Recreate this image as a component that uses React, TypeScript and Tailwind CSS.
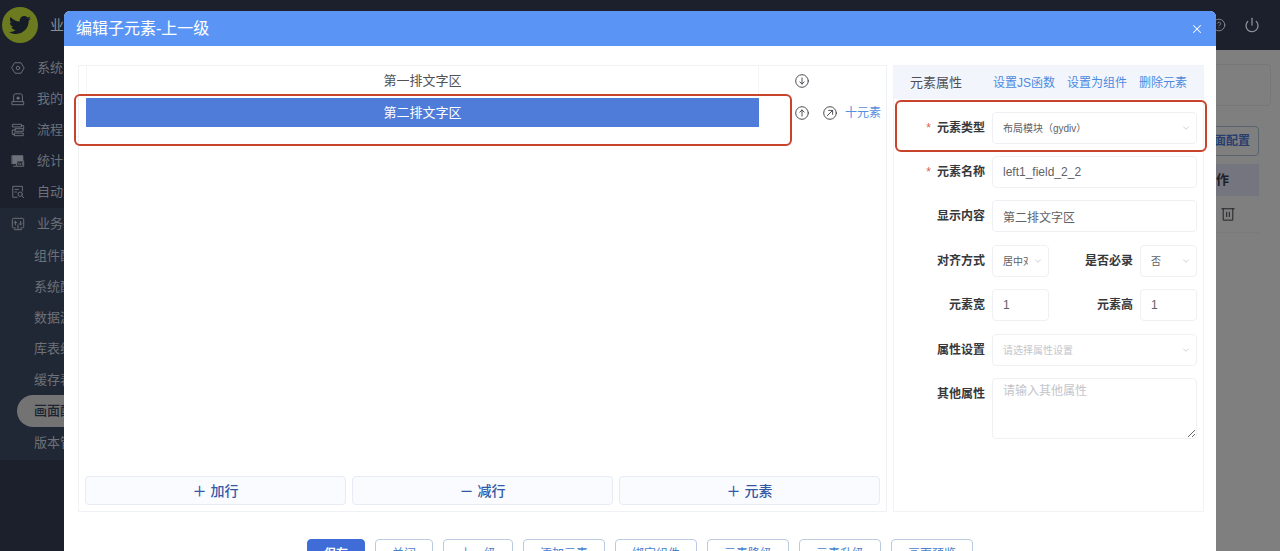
import type { ReactNode } from "react";
import { FaTwitter } from "react-icons/fa";
import { ChevronDown, CircleHelp, Power, X } from "lucide-react";

type IconProps = { children: ReactNode; className?: string };

function Stroke({ children, className = "size-3.5" }: IconProps) {
  return (
    <svg
      viewBox="0 0 16 16"
      className={className}
      fill="none"
      stroke="currentColor"
      strokeWidth="1.1"
      strokeLinecap="round"
      strokeLinejoin="round"
      aria-hidden="true"
    >
      {children}
    </svg>
  );
}

const menu = [
  {
    label: "系统管理",
    icon: (
      <>
        <path d="M4.6 2h6.8L15 8l-3.6 6H4.6L1 8z" />
        <circle cx="8" cy="8" r="2" />
      </>
    ),
  },
  {
    label: "我的工作",
    icon: (
      <>
        <path d="M3 11V4.500A2.500 2.500 0 0 1 5.500 2h5A2.500 2.500 0 0 1 13 4.500V11M1.500 11h13v3.500h-13z" />
        <circle cx="8" cy="7" r="1.300" fill="currentColor" />
      </>
    ),
  },
  {
    label: "流程管理",
    icon: (
      <>
        <path d="M2 1.500h10v3H2zM5 6.500h9v3H5zM4 11.500h10v3H4z" />
        <path d="M12 3h2.500v3.500M5 8H1.500v5H4" />
      </>
    ),
  },
  {
    label: "统计分析",
    icon: (
      <>
        <path d="M1.500 2h12v9h-12z" fill="currentColor" />
        <path d="M7 8h7.500v6H7z" fill="#1b202c" />
        <path d="M9 12v-2M11 12v-1M13 12v-2M3 14h3" />
      </>
    ),
  },
  {
    label: "自动流程",
    icon: (
      <>
        <path d="M7 14H2V1.500h11V7" />
        <path d="M4.500 5h4M4.500 8h2" />
        <circle cx="10.500" cy="10.500" r="2.500" />
        <path d="M12.500 12.500l2 2" />
      </>
    ),
  },
];

const submenu = ["组件配置", "系统配置", "数据源", "库表维护", "缓存表", "画面配置", "版本管理"];

function Sidebar() {
  return (
    <nav className="w-[155px] shrink-0 bg-[#1b202c] text-[13px] text-[#6d7179]">
      <ul className="pt-0.5">
        {menu.map((item) => (
          <li key={item.label}>
            <a href="#" className="flex h-[31px] items-center gap-3 pl-[11px]">
              <Stroke>{item.icon}</Stroke>
              {item.label}
            </a>
          </li>
        ))}
      </ul>
      <div className="mt-px bg-[#212835] pb-0.5">
        <a href="#" className="flex h-8 items-center gap-3 pl-[11px]">
          <Stroke>
            <path d="M5 12.500H3A1.500 1.500 0 0 1 1.500 11V3A1.500 1.500 0 0 1 3 1.500h10A1.500 1.500 0 0 1 14.500 3v8a1.500 1.500 0 0 1-1.500 1.500h-2M4 14.500h8" />
            <path d="M5 9V5M3.500 6.500L5 5l1.500 1.500M11 5v4M9.500 7.500L11 9l1.500-1.500M8 9v5" />
          </Stroke>
          业务平台
        </a>
        <ul>
          {submenu.map((label) => (
            <li key={label} className="pl-[17px]">
              <a
                href="#"
                className={
                  label === "画面配置"
                    ? "flex h-8 items-center rounded-l-full bg-[#737373] pl-[17px] font-medium text-[#1b2433]"
                    : "flex h-[31px] items-center pl-[17px]"
                }
              >
                {label}
              </a>
            </li>
          ))}
        </ul>
      </div>
    </nav>
  );
}

function TrashIcon() {
  return (
    <Stroke className="size-3.5">
      <path d="M1 2h14M2.500 2v13h11V2M6.500 6v5M9.500 6v5" />
    </Stroke>
  );
}

function Background() {
  return (
    <div className="flex h-full flex-col bg-[#7f7f7f]">
      <header className="flex h-[50px] shrink-0 items-center justify-between bg-[#1b202c] pr-5 pl-0.5 text-[#8b8e94]">
        <div className="flex items-center gap-3">
          <span className="flex size-9 items-center justify-center rounded-full bg-[#6c7a20] text-[#151c26]">
            <FaTwitter className="size-[22px]" />
          </span>
          <span className="text-sm">业</span>
        </div>
        <div className="flex items-center gap-[18px]">
          <CircleHelp className="size-3.5" strokeWidth={1.5} />
          <Power className="size-4" strokeWidth={2} />
        </div>
      </header>
      <div className="flex min-h-0 flex-1">
        <Sidebar />
        <main className="flex-1 pt-3.5 pr-[9px] pl-3">
          <div className="h-[42px] rounded border border-[#777]" />
          <div className="mt-5 mr-3 flex justify-end">
            <button className="h-[30px] rounded-sm border border-[#59626f] px-2 text-xs font-bold text-[#263d70]">
              画面配置
            </button>
          </div>
          <div className="mt-2 mr-3">
            <table className="w-full text-right text-[13px] text-[#1d1f24]">
              <thead>
                <tr className="h-8 bg-[#74757f]">
                  <th className="pr-[30px] font-bold">操作</th>
                </tr>
              </thead>
              <tbody>
                <tr className="h-9 border-b border-[#7a7a7a]">
                  <td className="pr-6">
                    <button aria-label="删除" className="ml-auto block">
                      <TrashIcon />
                    </button>
                  </td>
                </tr>
              </tbody>
            </table>
          </div>
        </main>
      </div>
    </div>
  );
}

function CircleArrow({ label, path }: { label: string; path: string }) {
  return (
    <button aria-label={label} className="text-[#45474c]">
      <Stroke className="size-3.5">
        <circle cx="8" cy="8" r="7.200" />
        <path d={path} />
      </Stroke>
    </button>
  );
}

function Canvas() {
  const bar = "h-[29px] rounded-sm border border-[#e6ebf5] bg-[#fafbfe] text-sm font-medium text-[#3358a5]";
  return (
    <section className="flex flex-1 flex-col border border-[#f0f1f4] px-1.5 pb-1.5">
      <div className="flex-1 space-y-0.5 pl-px">
        <div className="flex">
          <div className="flex h-[30px] flex-1 items-center justify-center border border-t-0 border-[#f3f4f6] text-[13px] text-[#505256]">
            第一排文字区
          </div>
          <div className="flex w-[121px] items-center pl-9">
            <CircleArrow label="下移" path="M8 4.500v7M5.500 9L8 11.500 10.500 9" />
          </div>
        </div>
        <div className="relative flex">
          <div className="flex h-[29px] flex-1 items-center justify-center bg-[#4f7cd8] text-[13px] text-white">
            第二排文字区
          </div>
          <div className="flex w-[121px] items-center gap-3.5 pl-9">
            <CircleArrow label="上移" path="M8 11.500v-7M5.500 7L8 4.500 10.500 7" />
            <CircleArrow label="进入" path="M5 11l6-6M6.500 5H11v4.500" />
            <a href="#" className="-ml-1.5 text-xs whitespace-nowrap text-[#5490e0]">
              十元素
            </a>
          </div>
          <div className="pointer-events-none absolute -top-1 right-[88px] -left-3 h-[52px] rounded-md border-2 border-[#c8432c]" />
        </div>
      </div>
      <div className="grid grid-cols-3 gap-1.5">
        <button className={bar}>＋ 加行</button>
        <button className={bar}>－ 减行</button>
        <button className={bar}>＋ 元素</button>
      </div>
    </section>
  );
}

const control =
  "block w-full min-w-0 appearance-none rounded-sm border border-[#eff0f3] bg-transparent pl-2.5 outline-none";

function Label({ id, children, required }: { id: string; children: ReactNode; required?: boolean }) {
  return (
    <label htmlFor={id} className="w-[91px] shrink-0 pr-[7px] text-right text-xs leading-8 font-bold text-[#36383c]">
      {required && <span className="mr-1.5 font-normal text-[#d9604c]">*</span>}
      {children}
    </label>
  );
}

function Select({ id, value, muted, narrow }: { id: string; value: string; muted?: boolean; narrow?: boolean }) {
  return (
    <div className="relative min-w-0 flex-1">
      <select
        id={id}
        className={`${control} h-8 text-[10px] ${narrow ? "pr-5" : "pr-7"} ${muted ? "text-[#c3c5ca]" : "text-[#606266]"}`}
      >
        <option>{value}</option>
      </select>
      <ChevronDown className="pointer-events-none absolute top-[11px] right-1.5 size-2.5" stroke="#c6c8cd" />
    </div>
  );
}

function Input({ id, value }: { id: string; value: string }) {
  return (
    <div className="min-w-0 flex-1">
      <input id={id} defaultValue={value} className={`${control} h-8 pr-2 text-xs text-[#606266]`} />
    </div>
  );
}

function Properties() {
  return (
    <section className="w-[311px] shrink-0 border border-[#f2f3f6]">
      <div className="flex h-[33px] items-center justify-between bg-[#f3f5fd] px-4">
        <h2 className="text-[13px] text-[#4d4f54]">元素属性</h2>
        <div className="flex gap-3 text-xs text-[#4a8be0]">
          <a href="#">设置JS函数</a>
          <a href="#">设置为组件</a>
          <a href="#">删除元素</a>
        </div>
      </div>
      <form className="space-y-[13px] pt-[13px] pr-1.5 pl-[7px]">
        <div className="space-y-3">
          <div className="relative flex">
            <Label id="type" required>元素类型</Label>
            <Select id="type" value="布局模块（gydiv）" />
            <div className="pointer-events-none absolute -top-3 -right-2.5 -left-1.5 h-[52px] rounded-md border-2 border-[#c8432c]" />
          </div>
          <div className="flex">
            <Label id="name" required>元素名称</Label>
            <Input id="name" value="left1_field_2_2" />
          </div>
          <div className="flex">
            <Label id="content">显示内容</Label>
            <Input id="content" value="第二排文字区" />
          </div>
        </div>
        <div className="space-y-3">
          <div className="flex">
            <Label id="align">对齐方式</Label>
            <Select id="align" value="居中对齐" narrow />
            <Label id="must">是否必录</Label>
            <Select id="must" value="否" narrow />
          </div>
          <div className="flex">
            <Label id="width">元素宽</Label>
            <Input id="width" value="1" />
            <Label id="height">元素高</Label>
            <Input id="height" value="1" />
          </div>
        </div>
        <div className="space-y-3">
          <div className="flex">
            <Label id="attrs">属性设置</Label>
            <Select id="attrs" value="请选择属性设置" muted />
          </div>
          <div className="flex">
            <Label id="other">其他属性</Label>
            <textarea
              id="other"
              placeholder="请输入其他属性"
              className={`${control} h-[61px] flex-1 resize pt-1 text-xs text-[#606266] placeholder:text-[#c3c5ca]`}
            />
          </div>
        </div>
      </form>
    </section>
  );
}

const actions = ["关闭", "上一级", "添加元素", "绑定组件", "元素降级", "元素升级", "画面预览"];

function Dialog() {
  return (
    <div
      role="dialog"
      aria-label="编辑子元素-上一级"
      className="relative mx-[5%] mt-[11px] overflow-hidden rounded-t-md bg-white"
    >
      <div className="flex h-[35px] items-center justify-between bg-[#5a95f5] px-3 text-white">
        <h1 className="text-base">编辑子元素-上一级</h1>
        <button aria-label="关闭窗口">
          <X className="size-3.5" strokeWidth={1.8} />
        </button>
      </div>
      <div className="flex min-h-[466px] gap-1.5 pt-[19px] pr-3 pl-3.5">
        <Canvas />
        <Properties />
      </div>
      <div className="flex justify-center gap-2.5 pt-[27px] pb-5 text-xs">
        <button className="h-[30px] rounded-sm border border-[#3f6cd6] bg-[#3f6cd6] px-4 font-bold text-white">
          保存
        </button>
        {actions.map((label) => (
          <button key={label} className="h-[30px] rounded-sm border border-[#bccbe0] px-4 text-[#4a7fcc]">
            {label}
          </button>
        ))}
      </div>
    </div>
  );
}

export default function App() {
  return (
    <div className="relative h-screen overflow-hidden font-['Liberation_Sans','Noto_Sans_CJK_SC',sans-serif]">
      <Background />
      <div className="absolute inset-0 overflow-hidden">
        <Dialog />
      </div>
    </div>
  );
}
